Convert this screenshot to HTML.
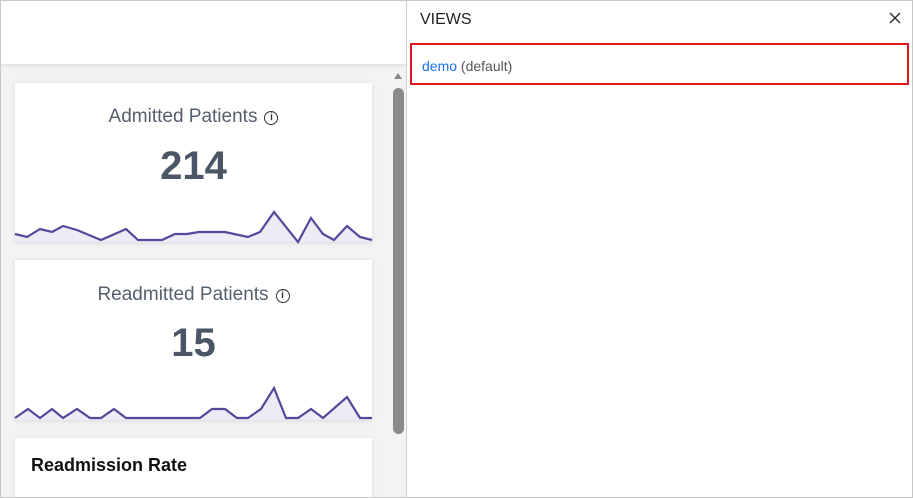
<!DOCTYPE html><html><head><style>
body{margin:0;width:913px;height:498px;overflow:hidden;font-family:"Liberation Sans",Roboto,sans-serif;background:#fff}
.wrap{position:absolute;left:0;top:0;width:911px;height:496px;border:1px solid #c8c8c8;overflow:hidden}
.left{position:absolute;left:-1px;top:-1px;width:406px;height:498px;background:#f3f3f4}
.hdr{position:absolute;left:0;top:0;width:406px;height:64px;background:#fff;box-shadow:0 2px 4px rgba(0,0,0,.08)}
.card{position:absolute;left:15px;width:357px;background:#fff;box-shadow:0 1px 5px rgba(0,0,0,.1);overflow:hidden}
.t{position:absolute;width:100%;text-align:center;color:#55606e;font-size:19px}
.n{position:absolute;width:100%;text-align:center;color:#4a5565;font-size:40px;font-weight:bold}
.i{display:inline-block;width:12px;height:12px;border:1.5px solid #333;border-radius:50%;font-size:10px;line-height:12px;text-align:center;vertical-align:2px;margin-left:7px;color:#333;font-weight:bold}
.panel{position:absolute;left:405px;top:0;width:506px;height:496px;border-left:1px solid #d0d0d0;background:#fff}
</style></head><body><div class="wrap">
<div class="left"><div class="hdr"></div>
<div class="card" style="top:83px;height:159px"><div class="t" style="top:23px">Admitted Patients<span class="i">i</span></div><div class="n" style="top:61px">214</div></div>
<div class="card" style="top:260px;height:160px"><div class="t" style="top:24px">Readmitted Patients<span class="i">i</span></div><div class="n" style="top:61px">15</div></div>
<div class="card" style="top:438px;height:70px"><div style="position:absolute;left:16px;top:17px;font-size:18px;font-weight:bold;color:#111">Readmission Rate</div></div>
<svg style="position:absolute;left:0;top:0" width="406" height="498">
<polyline fill="#eeebf6" stroke="none" points="15,234 27,237 40,229 52,232 63,226 77,230 101,240 126,229 138,240 162,240 175,234 187,234 199,232 225,232 248,237 260,232 274,212 298,242 311,218 323,234 334,240 347,226 360,237 372,240 372,242 15,242"/>
<polyline fill="none" stroke="#54489a" stroke-width="2.2" points="15,234 27,237 40,229 52,232 63,226 77,230 101,240 126,229 138,240 162,240 175,234 187,234 199,232 225,232 248,237 260,232 274,212 298,242 311,218 323,234 334,240 347,226 360,237 372,240"/>
<polyline fill="#eeebf6" stroke="none" points="15,418 28,409 40,418 52,409 63,418 77,409 90,418 101,418 114,409 126,418 200,418 212,409 225,409 237,418 248,418 261,409 274,388 286,418 298,418 311,409 323,418 347,397 360,418 372,418 372,420 15,420"/>
<polyline fill="none" stroke="#54489a" stroke-width="2.2" points="15,418 28,409 40,418 52,409 63,418 77,409 90,418 101,418 114,409 126,418 200,418 212,409 225,409 237,418 248,418 261,409 274,388 286,418 298,418 311,409 323,418 347,397 360,418 372,418"/>
<polygon points="394,79 398,73 402,79" fill="#888"/>
<rect x="393" y="88" width="11" height="346" rx="5.5" fill="#8a8a8a"/>
</svg></div>
<div class="panel">
<div style="position:absolute;left:13px;top:10px;font-size:16px;color:#222">VIEWS</div>
<svg style="position:absolute;left:481px;top:10px" width="14" height="14"><path d="M2 2L12 12M12 2L2 12" stroke="#333" stroke-width="1.5"/></svg>
<div style="position:absolute;left:3px;top:42px;width:495px;height:38px;border:2px solid #e0141e">
<div style="position:absolute;left:10px;top:13px;font-size:14px;color:#555"><span style="color:#1a73e8">demo</span> (default)</div></div>
</div></div></body></html>
